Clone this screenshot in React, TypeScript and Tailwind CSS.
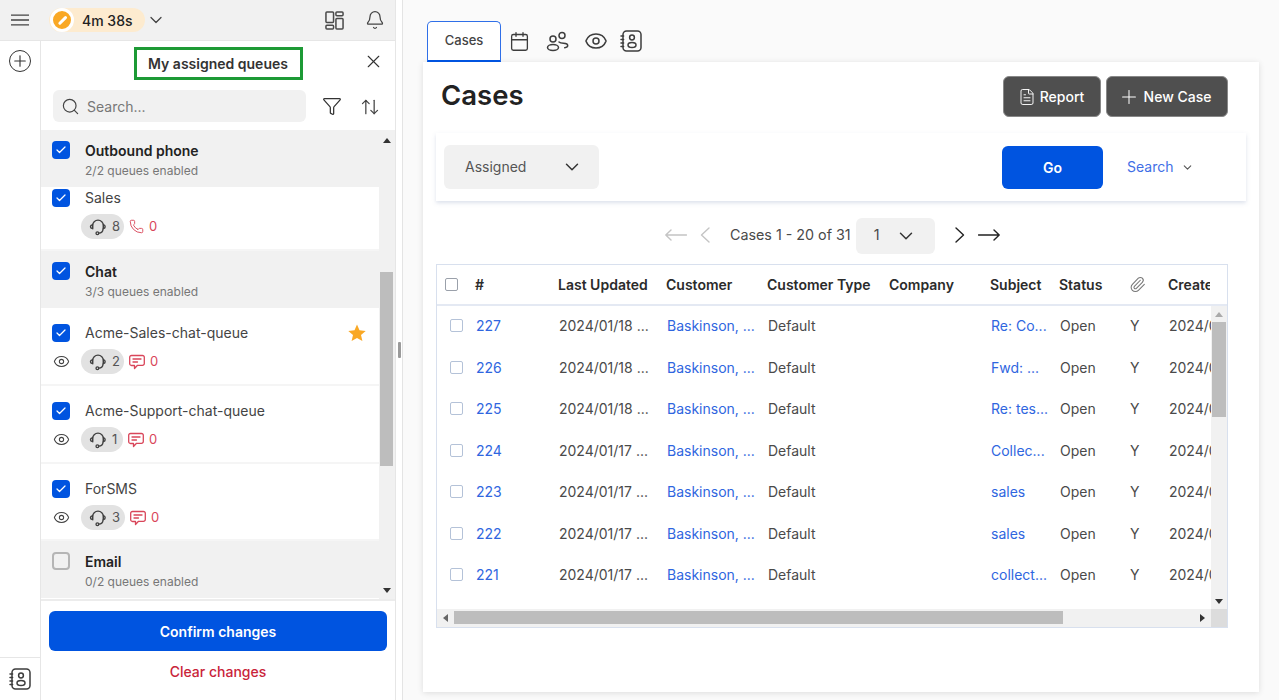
import { ArrowUpDown, Bell, Calendar, Check, ChevronDown, Eye, FileText, Funnel, Paperclip, Phone, Plus, Search, X } from "lucide-react";

const FONT = "font-['Inter','Liberation_Sans',sans-serif]";

function Headset() {
    return (
        <svg width="18" height="18" viewBox="0 0 18 18" fill="none" stroke="#3f3f3f" strokeWidth="1.3" strokeLinecap="round">
            <path d="M3.6 10.5V7.6a5.4 5.4 0 0 1 10.8 0v2.9" />
            <path d="M3.6 6.6C2.2 7 1.4 7.9 1.4 8.8s.8 1.7 2.2 1.9zM14.4 6.6c1.2.4 1.8 1.3 1.8 2.2s-.6 1.7-1.8 1.9z" />
            <path d="M14 11c0 2.6-1.8 4-4.4 4.2" />
            <circle cx="8.4" cy="15.3" r="1.4" />
        </svg>
    );
}

function ContactBook() {
    return (
        <svg width="22" height="22" viewBox="0 0 22 22" fill="none" stroke="#3d3d3d" strokeWidth="1.5" strokeLinecap="round">
            <rect x="3" y="1" width="18" height="20" rx="3.5" />
            <circle cx="12" cy="7.5" r="2.4" />
            <ellipse cx="12" cy="15" rx="4" ry="2.5" />
            <path d="M1 6h2.6M1 9.5h2.6M1 13h2.6M1 16.5h2.6" />
        </svg>
    );
}

function People() {
    return (
        <svg width="24" height="24" viewBox="0 0 24 24" fill="none" stroke="#3d3d3d" strokeWidth="1.5" strokeLinecap="round">
            <circle cx="8" cy="10" r="3" />
            <circle cx="17" cy="6.5" r="3" />
            <ellipse cx="8" cy="18.5" rx="5.5" ry="3" />
            <path d="M14 13c1.2 1.2 3 1.2 4.5 1.2 2.4 0 4.2 1 4.2 2.4 0 1.3-1.4 2-3 2.1" />
        </svg>
    );
}

function Panels() {
    return (
        <svg width="19" height="19" viewBox="0 0 20 20" fill="none" stroke="#4a4a4a" strokeWidth="1.6">
            <rect x="1" y="1" width="8" height="11" rx="1" />
            <rect x="1" y="15" width="8" height="4" rx="1" />
            <rect x="11.5" y="1" width="7.5" height="4" rx="1" />
            <rect x="11.5" y="8" width="7.5" height="11" rx="1" />
        </svg>
    );
}

function Hamburger() {
    return (
        <svg width="18" height="12" viewBox="0 0 18 12" fill="none" stroke="#444" strokeWidth="1.3">
            <path d="M0 1.2h18M0 6h18M0 10.8h18" />
        </svg>
    );
}

function StarIcon() {
    return (
        <svg width="18" height="18" viewBox="0 0 18 18" fill="#f9a825" className="ml-auto mr-[13px]">
            <path d="M9 .5l2.500 5.800 6.200.6-4.700 4.100 1.400 6.100L9 13.900l-5.400 3.200L5 11 .3 6.900l6.200-.6z" />
        </svg>
    );
}

function ChatBubble() {
    return (
        <svg width="16" height="16" viewBox="0 0 16 16" fill="none" stroke="#d9465a" strokeWidth="1.3" strokeLinecap="round" strokeLinejoin="round">
            <path d="M2.500 1.500h11a1.800 1.800 0 0 1 1.800 1.800v6.200a1.800 1.800 0 0 1-1.800 1.800H8.500L5.500 14.500v-3H2.500A1.800 1.800 0 0 1 .7 9.500V3.300A1.800 1.800 0 0 1 2.500 1.500z" />
            <path d="M4 5h8M4 8h4.500" />
        </svg>
    );
}

function LongArrow({ dir, color }: { dir: "left" | "right"; color: string }) {
    return (
        <svg width="22" height="12" viewBox="0 0 22 12" fill="none" stroke={color} strokeWidth="1.4" strokeLinecap="round" strokeLinejoin="round">
            {dir === "left" ? <path d="M21.500 6H.8M6 1 .8 6 6 11" /> : <path d="M.5 6h20.700M16 1l5.200 5L16 11" />}
        </svg>
    );
}

function PageChevron({ dir, color }: { dir: "left" | "right"; color: string }) {
    return (
        <svg width="10" height="16" viewBox="0 0 10 16" fill="none" stroke={color} strokeWidth="1.4" strokeLinecap="round" strokeLinejoin="round">
            {dir === "left" ? <path d="M9 1 1.500 8 9 15" /> : <path d="M1 1l7.500 7L1 15" />}
        </svg>
    );
}

function Box({ checked }: { checked: boolean }) {
    if (!checked) return <div className="h-[18px] w-[18px] rounded-[4px] border-2 border-[#b5b5b5] bg-[#f1f1f1]" />;
    return (
        <div className="flex h-[18px] w-[18px] items-center justify-center rounded-[4px] bg-[#0054e0]">
            <Check size={12} strokeWidth={2.5} className="text-white" />
        </div>
    );
}

function Group({ title, sub, checked }: { title: string; sub: string; checked: boolean }) {
    return (
        <div className="flex h-[57px] bg-[#f1f1f1] pl-[11px] pt-[11px]">
            <Box checked={checked} />
            <div className="ml-[15px]">
                <div className="text-[14px] leading-[20px] font-semibold text-[#222]">{title}</div>
                <div className="text-[12px] leading-[20px] text-[#777]">{sub}</div>
            </div>
        </div>
    );
}

function Queue({ name, agents, kind, eye, star, top, height, pill }: { name: string; agents: number; kind: "phone" | "chat"; eye?: boolean; star?: boolean; top: string; height: string; pill: string }) {
    return (
        <div className={`${height} ${top} border-b-2 border-[#f5f5f5] bg-white pl-[11px]`}>
            <div className="flex h-[18px] items-center">
                <Box checked />
                <span className="ml-[15px] -mt-[2px] text-[14px] text-[#444]">{name}</span>
                {star && <StarIcon />}
            </div>
            <div className="mt-[7px] flex h-[25px] items-center">
                <div className="w-[29px] pl-[1px]">{eye && <Eye size={17} strokeWidth={1.5} className="text-[#444]" />}</div>
                <div className={`flex h-[25px] ${pill} items-center gap-[5px] rounded-full bg-[#e2e2e2] pl-[8px] text-[13px] text-[#555]`}>
                    <Headset />
                    {agents}
                </div>
                <div className="ml-[5px] flex items-center gap-[5px] text-[13px] text-[#d9465a]">
                    {kind === "phone" ? <Phone size={15} strokeWidth={1.5} /> : <ChatBubble />}
                    0
                </div>
            </div>
        </div>
    );
}

function TopBar() {
    return (
        <div className="flex h-[41px] items-center border-b border-[#e6e6e6] bg-[#f1f1f1] pl-[11px] pr-[10px]">
            <Hamburger />
            <div className="ml-[20px] flex h-[24px] w-[96px] items-center rounded-full bg-[#fdebcf] pl-[1px]">
                <div className="flex h-[24px] w-[24px] items-center justify-center rounded-full border-[3px] border-white bg-[#f9a825]">
                    <div className="h-[2.5px] w-[11px] -rotate-45 rounded-full bg-white" />
                </div>
                <span className="ml-[8px] text-[14px] font-medium text-[#222]">4m 38s</span>
            </div>
            <ChevronDown size={20} strokeWidth={1.5} className="ml-[1px] text-[#444]" />
            <div className="ml-auto"><Panels /></div>
            <Bell size={20} strokeWidth={1.5} className="ml-[21px] text-[#444]" />
        </div>
    );
}

function QueuePanel() {
    return (
        <div className="flex w-[355px] flex-col bg-white">
            <div className="relative flex h-[41px] shrink-0 items-start justify-center pt-[6px]">
                <div className="flex h-[33px] w-[169px] items-center justify-center border-[3px] border-[#1d9a35] text-[14px] font-semibold text-[#333]">My assigned queues</div>
                <X size={21} strokeWidth={1.3} className="absolute right-[11px] top-[10px] text-[#333]" />
            </div>
            <div className="flex h-[48px] shrink-0 items-start pl-[12px] pt-[8px]">
                <div className="flex h-[32px] w-[253px] items-center gap-[7px] rounded-[6px] bg-[#f1f1f1] pl-[8px] text-[14px] text-[#777]">
                    <Search size={19} strokeWidth={1.5} className="text-[#444]" />
                    Search...
                </div>
                <Funnel size={20} strokeWidth={1.5} className="ml-[16px] mt-[6px] text-[#333]" />
                <ArrowUpDown size={20} strokeWidth={1.5} className="ml-[18px] mt-[7px] text-[#444]" />
            </div>
            <div className="flex h-[471px] shrink-0 border-b-2 border-[#ececec]">
                <div className="h-full w-[338px] overflow-hidden">
                    <Group title="Outbound phone" sub="2/2 queues enabled" checked />
                    <Queue name="Sales" agents={8} kind="phone" top="pt-[2px]" height="h-[64px]" pill="w-[43px]" />
                    <Group title="Chat" sub="3/3 queues enabled" checked />
                    <Queue name="Acme-Sales-chat-queue" agents={2} kind="chat" eye star top="pt-[16px]" height="h-[78px]" pill="w-[43px]" />
                    <Queue name="Acme-Support-chat-queue" agents={1} kind="chat" eye top="pt-[16px]" height="h-[78px]" pill="w-[42px]" />
                    <Queue name="ForSMS" agents={3} kind="chat" eye top="pt-[16px]" height="h-[77px]" pill="w-[44px]" />
                    <Group title="Email" sub="0/2 queues enabled" checked={false} />
                </div>
                <div className="relative w-[16px] bg-[#f1f1f1]">
                    <div className="absolute left-[1px] top-[142px] h-[194px] w-[13px] bg-[#bdbdbd]" />
                    <div className="absolute left-[4px] top-[8px] h-0 w-0 border-x-[4px] border-b-[5px] border-x-transparent border-b-[#333]" />
                    <div className="absolute bottom-[6px] left-[4px] h-0 w-0 border-x-[4px] border-t-[5px] border-x-transparent border-t-[#333]" />
                </div>
            </div>
            <div className="flex flex-col items-center px-[8px] pt-[10px]">
                <button className="h-[40px] w-[338px] rounded-[6px] bg-[#0054e0] text-[14px] font-semibold text-white">Confirm changes</button>
                <button className="mt-[10px] text-[14px] font-medium text-[#c9243a]">Clear changes</button>
            </div>
        </div>
    );
}

const rows = [
    { id: 227, date: "2024/01/18 ...", subject: "Re: Co..." },
    { id: 226, date: "2024/01/18 ...", subject: "Fwd: ..." },
    { id: 225, date: "2024/01/18 ...", subject: "Re: tes..." },
    { id: 224, date: "2024/01/17 ...", subject: "Collec..." },
    { id: 223, date: "2024/01/17 ...", subject: "sales" },
    { id: 222, date: "2024/01/17 ...", subject: "sales" },
    { id: 221, date: "2024/01/17 ...", subject: "collect..." },
];

function CasesTable() {
    return (
        <div className="ml-[13px] mt-[10px] h-[364px] w-[792px] border border-[#d8e0ee] bg-white">
            <div className="flex h-[41px] items-center border-b-2 border-[#e4e9f3] text-[14px] font-semibold text-[#2b2b2b]">
                <div className="ml-[8px] h-[13px] w-[13px] rounded-[2px] border border-[#9aa0aa]" />
                <div className="ml-[17px] w-[83px]">#</div>
                <div className="w-[108px] whitespace-nowrap">Last Updated</div>
                <div className="w-[101px]">Customer</div>
                <div className="w-[122px] whitespace-nowrap">Customer Type</div>
                <div className="w-[101px]">Company</div>
                <div className="w-[69px]">Subject</div>
                <div className="w-[70px]">Status</div>
                <div className="w-[39px]"><Paperclip size={17} strokeWidth={1.5} className="text-[#777]" /></div>
                <div className="w-[42px] overflow-hidden whitespace-nowrap">Created</div>
            </div>
            <div className="flex h-[303px]">
                <div className="w-[775px] overflow-hidden">
                    <div className="-mt-[1px]">
                        {rows.map((row) => (
                            <div key={row.id} className="flex h-[41.5px] items-center text-[14px] text-[#4a4a4a]">
                                <div className="ml-[13px] h-[13px] w-[13px] rounded-[2px] border border-[#b4c2d8]" />
                                <div className="ml-[13px] w-[83px] text-[#2f66e0]">{row.id}</div>
                                <div className="w-[108px] whitespace-nowrap">{row.date}</div>
                                <div className="w-[101px] whitespace-nowrap text-[#2f66e0]">Baskinson, ...</div>
                                <div className="w-[223px]">Default</div>
                                <div className="w-[69px] whitespace-nowrap text-[#2f66e0]">{row.subject}</div>
                                <div className="w-[70px]">Open</div>
                                <div className="w-[39px]">Y</div>
                                <div className="w-[42px] overflow-hidden whitespace-nowrap">2024/01/18</div>
                            </div>
                        ))}
                    </div>
                </div>
                <div className="relative w-[16px] bg-[#f1f1f1]">
                    <div className="absolute left-[1px] top-[16px] h-[95px] w-[14px] bg-[#bdbdbd]" />
                    <div className="absolute left-[4px] top-[6px] h-0 w-0 border-x-[4px] border-b-[5px] border-x-transparent border-b-[#aaa]" />
                    <div className="absolute bottom-[5px] left-[4px] h-0 w-0 border-x-[4px] border-t-[5px] border-x-transparent border-t-[#333]" />
                </div>
            </div>
            <div className="flex h-[18px]">
                <div className="relative w-[775px] bg-[#f1f1f1]">
                    <div className="absolute left-[17px] top-[2px] h-[13px] w-[609px] bg-[#bdbdbd]" />
                    <div className="absolute left-[6px] top-[5px] h-0 w-0 border-y-[4px] border-r-[5px] border-y-transparent border-r-[#666]" />
                    <div className="absolute right-[6px] top-[5px] h-0 w-0 border-y-[4px] border-l-[5px] border-y-transparent border-l-[#333]" />
                </div>
                <div className="w-[16px] bg-[#dcdcdc]" />
            </div>
        </div>
    );
}

function CasesCard() {
    return (
        <div className="ml-[20px] h-[630px] w-[836px] bg-white shadow-[0_1px_6px_rgba(0,0,0,0.12)]">
            <div className="flex h-[71px] items-start pl-[18px] pr-[31px] pt-[14px]">
                <h1 className="text-[27.5px] leading-[38px] font-semibold text-[#222]">Cases</h1>
                <button className="ml-auto flex h-[41px] w-[98px] items-center justify-center gap-[4px] rounded-[6px] border border-[#888] bg-[#4f4f4f] pr-[2px] text-[14px] font-medium text-white">
                    <FileText size={18} strokeWidth={1.25} />
                    Report
                </button>
                <button className="ml-[5px] flex h-[41px] w-[122px] items-center justify-center gap-[4px] rounded-[6px] border border-[#888] bg-[#4f4f4f] pr-[5px] text-[14px] font-medium text-white">
                    <Plus size={22} strokeWidth={1.1} />
                    New Case
                </button>
            </div>
            <div className="ml-[13px] flex h-[68px] w-[810px] items-center bg-white pl-[8px] shadow-[0_2px_4px_rgba(120,140,180,0.25)]">
                <div className="flex h-[44px] w-[155px] items-center justify-between rounded-[6px] bg-[#f1f1f1] pl-[21px] pr-[16px] text-[14px] text-[#555]">
                    <span className="-mt-[1px]">Assigned</span>
                    <ChevronDown size={22} strokeWidth={1.6} className="text-[#333]" />
                </div>
                <button className="ml-[403px] h-[43px] w-[101px] rounded-[6px] bg-[#0054e0] text-[14px] font-semibold text-white">Go</button>
                <span className="ml-[24px] -mt-[1px] text-[14px] text-[#3f6fe6]">Search</span>
                <ChevronDown size={13} strokeWidth={2} className="ml-[8px] text-[#555]" />
            </div>
            <div className="mt-[17px] flex h-[36px] items-center pl-[242px] text-[14.3px] text-[#4a4a4a]">
                <div className="-mt-[2px]"><LongArrow dir="left" color="#c4c4c4" /></div>
                <div className="-mt-[2px] ml-[13px]"><PageChevron dir="left" color="#c4c4c4" /></div>
                <span className="-mt-[2px] ml-[20px] whitespace-nowrap">Cases 1 - 20 of 31</span>
                <div className="ml-[5px] flex h-[36px] w-[79px] items-center rounded-[6px] bg-[#f1f1f1] pl-[18px]">
                    <span className="-mt-[2px]">1</span>
                    <ChevronDown size={22} strokeWidth={1.6} className="ml-[16px] text-[#333]" />
                </div>
                <div className="-mt-[2px] ml-[20px]"><PageChevron dir="right" color="#222" /></div>
                <div className="-mt-[2px] ml-[13px]"><LongArrow dir="right" color="#222" /></div>
            </div>
            <CasesTable />
        </div>
    );
}

export default function App() {
    return (
        <div className={`${FONT} flex h-[700px] w-[1279px] overflow-hidden bg-[#fafafa]`}>
            <div className="flex w-[396px] shrink-0 flex-col border-r border-[#e6e6e6]">
                <TopBar />
                <div className="flex flex-1">
                    <div className="flex w-[41px] shrink-0 flex-col items-center justify-between border-r border-[#e6e6e6] bg-white pb-[10px] pt-[9px]">
                        <div className="flex h-[22px] w-[22px] items-center justify-center rounded-full border-[1.5px] border-[#333]">
                            <Plus size={18} strokeWidth={1.5} className="text-[#333]" />
                        </div>
                        <div className="w-full border-t border-[#e6e6e6] pl-[9px] pt-[10px]">
                            <ContactBook />
                        </div>
                    </div>
                    <QueuePanel />
                </div>
            </div>
            {/* resize strip with its grab handle */}
            <div className="relative w-[7px] shrink-0 border-r border-[#e4e4e4] bg-white">
                <div className="absolute left-[2px] top-[342px] h-[16px] w-[3px] rounded-[1px] bg-[#9a9a9a]" />
            </div>
            <div className="min-w-0 flex-1">
                <div className="flex h-[62px] items-end pl-[24px]">
                    <div className="flex h-[41px] w-[74px] items-center justify-center rounded-t-[5px] border border-b-2 border-[#2f6fe8] border-b-[#0054e0] bg-white text-[13px] font-medium text-[#444]">Cases</div>
                    <div className="mb-[9px] ml-[8px] flex items-center gap-[15px]">
                        <Calendar size={21} strokeWidth={1.5} className="text-[#3d3d3d]" />
                        <People />
                        <Eye size={24} strokeWidth={1.5} className="-mr-[3px] text-[#3d3d3d]" />
                        <ContactBook />
                    </div>
                </div>
                <CasesCard />
            </div>
        </div>
    );
}
